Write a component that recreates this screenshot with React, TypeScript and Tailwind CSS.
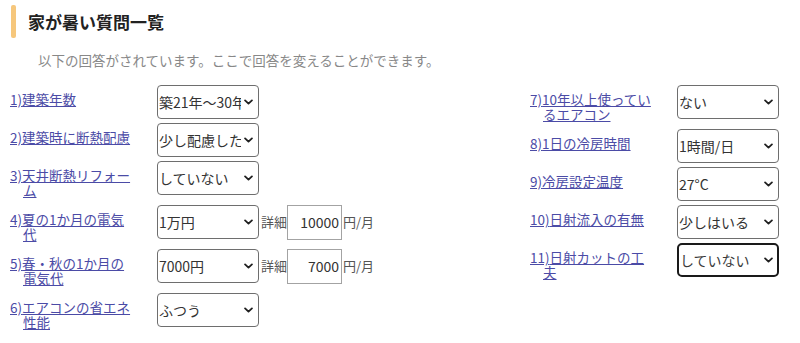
import React from "react";

type Q = { no: string; label: string; value: string; options: string[]; detail?: string; focused?: boolean };

const left: Q[] = [
  { no: "1)", label: "建築年数", value: "築21年～30年", options: ["築10年以内", "築11年～20年", "築21年～30年", "築31年以上"] },
  { no: "2)", label: "建築時に断熱配慮", value: "少し配慮した", options: ["配慮した", "少し配慮した", "配慮していない"] },
  { no: "3)", label: "天井断熱リフォーム", value: "していない", options: ["した", "していない"] },
  { no: "4)", label: "夏の1か月の電気代", value: "1万円", options: ["5000円", "7000円", "1万円", "1万5000円"], detail: "10000" },
  { no: "5)", label: "春・秋の1か月の電気代", value: "7000円", options: ["5000円", "7000円", "1万円"], detail: "7000" },
  { no: "6)", label: "エアコンの省エネ性能", value: "ふつう", options: ["高い", "ふつう", "低い"] },
];

const right: Q[] = [
  { no: "7)", label: "10年以上使っているエアコン", value: "ない", options: ["ある", "ない"] },
  { no: "8)", label: "1日の冷房時間", value: "1時間/日", options: ["1時間/日", "3時間/日", "6時間/日"] },
  { no: "9)", label: "冷房設定温度", value: "27°C", options: ["25°C", "26°C", "27°C", "28°C"] },
  { no: "10)", label: "日射流入の有無", value: "少しはいる", options: ["はいる", "少しはいる", "はいらない"] },
  { no: "11)", label: "日射カットの工夫", value: "していない", options: ["している", "していない"], focused: true },
];

function Chevron() {
  return (
    <svg
      width="9"
      height="6"
      viewBox="0 0 10 6"
      className="absolute right-[6px] top-1/2 -translate-y-1/2 pointer-events-none"
    >
      <path d="M1.2 1.2L5 4.8L8.8 1.2" fill="none" stroke="#1f1f1f" strokeWidth="2" strokeLinecap="round" strokeLinejoin="round" />
    </svg>
  );
}

function Row({ q }: { q: Q }) {
  return (
    <div className="flex items-start">
      <div className="w-[147px] shrink-0 pt-[7px] pb-[3px] pl-[13px] pr-[23px] indent-[-13px] text-[13.5px] leading-[15px]">
        <a href="#" className="text-[#4b4ba6] underline underline-offset-[1px]">
          {q.no}
          {q.label}
        </a>
      </div>
      <div className="relative w-[102px] h-[34px] shrink-0">
        <select
          defaultValue={q.value}
          className={
            q.focused
              ? "appearance-none w-full h-full bg-white border-2 border-[#1a1a1a] rounded-[5px] pl-[1px] pr-[17px] text-[14px] text-[#3a3a3a] outline-none"
              : "appearance-none w-full h-full bg-white border border-[#6e6e6e] rounded-[4px] pl-[1px] pr-[17px] text-[14px] text-[#333] outline-none"
          }
        >
          {q.options.map((o) => (
            <option key={o} value={o}>
              {o}
            </option>
          ))}
        </select>
        <Chevron />
      </div>
      {q.detail && (
        <div className="flex items-center h-[34px] ml-[2px] text-[13px] text-[#555]">
          <span>詳細</span>
          <input
            readOnly
            defaultValue={q.detail}
            className="w-[55px] h-[35px] border border-[#a3a3a3] bg-white text-right pr-[2px] text-[14px] text-[#333] outline-none"
          />
          <span className="ml-px">円/月</span>
        </div>
      )}
    </div>
  );
}

export default function App() {
  return (
    <div className="w-[800px] h-[343px] bg-white pl-[10px] pt-[5px] font-['Noto_Sans_CJK_JP',sans-serif] overflow-hidden">
      <div className="flex items-center h-[33px]">
        <div className="ml-px w-[5px] h-full bg-[#f6c77c] rounded-[2px]" />
        <h1 className="ml-[12px] text-[17px] font-bold text-[#222] leading-none">家が暑い質問一覧</h1>
      </div>
      <p className="mt-[13px] pl-[28px] text-[13.5px] leading-[18px] text-[#888]">
        以下の回答がされています。ここで回答を変えることができます。
      </p>
      <div className="mt-[16px] flex">
        <div className="w-[520px] flex flex-col gap-[4px]">
          {left.map((q) => (
            <Row key={q.no} q={q} />
          ))}
        </div>
        <div className="flex flex-col gap-[4px]">
          {right.map((q) => (
            <Row key={q.no} q={q} />
          ))}
        </div>
      </div>
    </div>
  );
}
